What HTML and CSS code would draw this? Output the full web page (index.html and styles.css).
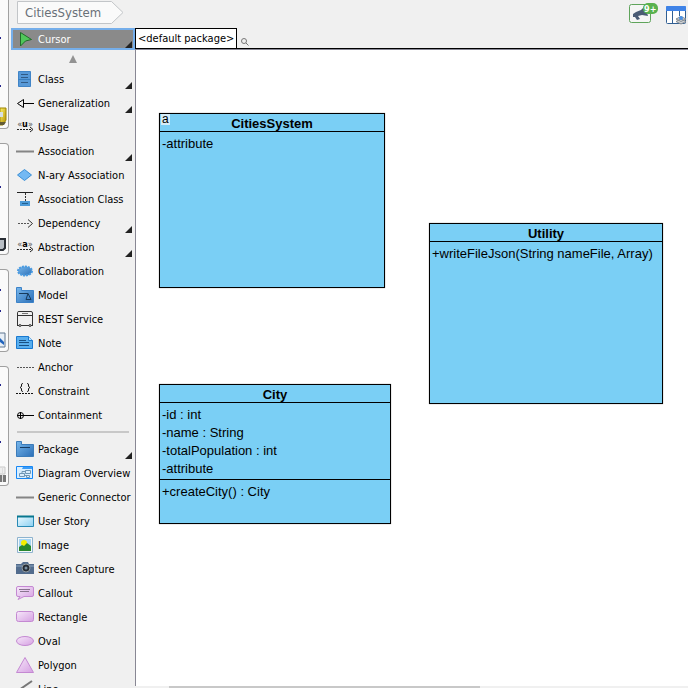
FILE: index.html
```html
<!DOCTYPE html>
<html lang="en">
<head>
<meta charset="utf-8">
<title>CitiesSystem</title>
<link rel="stylesheet" href="styles.css">
</head>
<body>
<svg class="defs" aria-hidden="true">
  <defs>
    <linearGradient id="blue" x1="0" y1="0" x2="1" y2="1"><stop offset="0" stop-color="#77b7ec"/><stop offset="1" stop-color="#2c6fb7"/></linearGradient>
    <linearGradient id="pink" x1="0" y1="0" x2="1" y2="1"><stop offset="0" stop-color="#f7e8fa"/><stop offset="1" stop-color="#d5a0e2"/></linearGradient>
    <linearGradient id="sky" x1="0" y1="0" x2="1" y2="1"><stop offset="0" stop-color="#ecfaff"/><stop offset="1" stop-color="#8bd0f2"/></linearGradient>
    <linearGradient id="gold" x1="0" y1="0" x2="1" y2="1"><stop offset="0" stop-color="#fff36a"/><stop offset="1" stop-color="#b18c00"/></linearGradient>
  </defs>
</svg>
<header class="topbar">
  <a class="crumb" href="#">
    <svg class="crumb-shape" viewBox="0 0 108 23" aria-hidden="true"><path d="M.5 .5H94.500L106 11.500L94.500 22.500H.5Z" fill="#fafafa" stroke="#c2c5c8"/></svg>
    <span>CitiesSystem</span>
  </a>
  <div class="tools">
    <button class="tool" aria-label="Notifications">
      <svg width="32" height="24" viewBox="0 0 32 24"><rect x="1.500" y="2.500" width="21" height="18" rx="2" fill="#f5f5f5" stroke="#5fa45b"/><path d="M5 12L8 10L13 8L17 4L20 14L14 13L10 14L12 17L9 18L7 15L5 15Z" fill="#4a5b74"/><rect x="15" y="1" width="15" height="11" rx="5" fill="#58b14e"/><text x="16" y="10" class="count">9+</text></svg>
    </button>
    <button class="tool" aria-label="Panels">
      <svg width="22" height="24" viewBox="0 0 22 24"><rect x=".5" y="4.500" width="19" height="17" rx="1" fill="#fff" stroke="#315f93"/><path d="M0 5Q0 4 1 4H19Q20 4 20 5V9H0Z" fill="#3f83e7"/><path d="M6.500 9V21M13.500 9V14" stroke="#315f93"/><path d="M10 19.500L15 17L20 19.500L15 22ZM10 17L15 14.500L20 17L15 19.500Z" fill="#cfd3d7" stroke="#858b91"/><circle cx="15" cy="16" r="2" fill="#4b91e3"/></svg>
    </button>
  </div>
</header>
<main class="workspace">
  <aside class="strip" aria-label="Diagram groups">
    <div class="group first"><i class="mark"></i><i class="mark"></i><svg width="7" height="19" viewBox="0 0 7 19"><path d="M0 1H6V13L3 18H0Z" fill="url(#gold)" stroke="#9f8600"/><path d="M0 5H3V10H0Z" fill="#d6e0e5"/><path d="M0 15H6L4 18H0" fill="#625b35"/></svg></div>
    <div class="group second"><i class="mark"></i><svg width="7" height="15" viewBox="0 0 7 15"><path d="M0 2H5V11L3 13H0" fill="#b8bec5" stroke="#292e35" stroke-width="2"/></svg></div>
    <div class="group third"><i class="mark"></i><i class="mark"></i><svg width="7" height="17" viewBox="0 0 7 17"><path d="M0 1H5V15H0" fill="#e8eff6" stroke="#5f7690"/><path d="M0 6L4 10V13L0 10" fill="#2064bd"/></svg></div>
    <div class="group fourth"><i class="mark"></i><i class="mark"></i><svg width="7" height="17" viewBox="0 0 7 17"><path d="M0 1H5V8H0" fill="#eee" stroke="#c8c8c8"/><path d="M0 9H6V16H0Z" fill="#777"/><path d="M2.500 1V16" stroke="#ddd"/></svg></div>
  </aside>
  <nav class="palette" aria-label="Shapes">
    <button class="item selected"><svg viewBox="0 0 20 20"><path d="M5.500 3.500L16.500 10.500L10.500 12L5.500 17Z" fill="#50c75a" stroke="#216b2a"/></svg>Cursor<i class="more"></i></button>
    <button class="scroll" aria-label="Scroll up"><svg width="10" height="8" viewBox="0 0 10 8"><path d="M5 0L9 8H1Z" fill="#929292"/></svg></button>
    <button class="item"><svg viewBox="0 0 20 20"><path d="M3.500 2.500H15.500V17.500H3.500Z" fill="#5799d8" stroke="#4084c7"/><path d="M3 10.500H16" stroke="#397ebf"/><path d="M6 5.500H13M6 8.500H13M6 13.500H13" stroke="#315b86"/></svg>Class<i class="more"></i></button>
    <button class="item"><svg viewBox="0 0 20 20"><path d="M8.500 6.500L2.500 10.500L8.500 14.500ZM9 10.500H19" fill="none" stroke="#000"/></svg>Generalization<i class="more"></i></button>
    <button class="item"><svg viewBox="0 0 20 20"><text x="10" y="10" class="stereo">«<tspan class="key">u</tspan>»</text><path d="M2 12.500H17" stroke="#222" stroke-dasharray="2 1"/><path d="M15 10L18 12.500L15 15" fill="none" stroke="#222"/></svg>Usage</button>
    <button class="item"><svg viewBox="0 0 20 20"><path d="M1 10.500H19" stroke="#858585" stroke-width="2"/></svg>Association<i class="more"></i></button>
    <button class="item"><svg viewBox="0 0 20 20"><path d="M9.500 4.500L16.500 10L9.500 15.500L2.500 10Z" fill="#74b9f3" stroke="#3b8fd6"/></svg>N-ary Association</button>
    <button class="item"><svg viewBox="0 0 20 20"><path d="M2 3.500H18" stroke="#222"/><path d="M10.500 4V12" stroke="#333" stroke-dasharray="2 1"/><path d="M5 12H15V17H5Z" fill="#4b9ad8"/><path d="M7 14.500H13" stroke="#24608f"/></svg>Association Class</button>
    <button class="item"><svg viewBox="0 0 20 20"><path d="M3 10.500H15" stroke="#555" stroke-dasharray="2 1"/><path d="M13 6.500L17.500 10.500L13 14.500" fill="none" stroke="#333"/></svg>Dependency<i class="more"></i></button>
    <button class="item"><svg viewBox="0 0 20 20"><text x="10" y="10" class="stereo">«<tspan class="key">a</tspan>»</text><path d="M2 12.500H17" stroke="#222" stroke-dasharray="2 1"/><path d="M15 10L18 12.500L15 15" fill="none" stroke="#222"/></svg>Abstraction<i class="more"></i></button>
    <button class="item"><svg viewBox="0 0 20 20"><ellipse cx="10" cy="10" rx="7" ry="4.500" fill="url(#blue)" stroke="#4a9be1" stroke-width="2" stroke-dasharray="2 1"/></svg>Collaboration</button>
    <button class="item"><svg viewBox="0 0 20 20"><path d="M1.500 2.500H6.500V5.500H18.500V17.500H1.500Z" fill="url(#blue)" stroke="#3c82c8"/><path d="M4 8.500H13L16 14.500H11L13 8.500" fill="none" stroke="#17395a"/></svg>Model</button>
    <button class="item"><svg viewBox="0 0 20 20"><path d="M2.500 17V3.500Q2.500 2.500 4 2.500H16Q17.500 2.500 17.500 4V17M2 6.500H18M3 16.500H17" fill="none" stroke="#333"/><path d="M7 4.500H13" stroke="#777"/><circle cx="5" cy="16.500" r="1" fill="#eee" stroke="#333"/><circle cx="15" cy="16.500" r="1" fill="#eee" stroke="#333"/></svg>REST Service</button>
    <button class="item"><svg viewBox="0 0 20 20"><path d="M1.500 3.500H13.500L17.500 7.500V15.500H1.500Z" fill="#58aeee" stroke="#1979d0"/><path d="M13.500 3.500V7.500H17.500" fill="#c5e5fb" stroke="#1979d0"/><path d="M4 7.500H11M4 9.500H14M4 12.500H14" stroke="#184f83"/></svg>Note</button>
    <button class="item"><svg viewBox="0 0 20 20"><path d="M2 10.500H19" stroke="#555" stroke-dasharray="2 1"/></svg>Anchor</button>
    <button class="item"><svg viewBox="0 0 20 20"><path d="M8 2.500H7.500Q6.500 2.500 6.500 4V5.500L5 6.500L6.500 7.500V9Q6.500 10.500 7.500 10.500H8M12 2.500H12.500Q13.500 2.500 13.500 4V5.500L15 6.500L13.500 7.500V9Q13.500 10.500 12.500 10.500H12" fill="none" stroke="#111"/><path d="M1 12.500H19" stroke="#111" stroke-dasharray="2 1"/></svg>Constraint</button>
    <button class="item"><svg viewBox="0 0 20 20"><circle cx="5.500" cy="10.500" r="3" fill="none" stroke="#000"/><path d="M2 10.500H19M5.500 7V14" stroke="#000"/></svg>Containment</button>
    <hr class="divider">
    <button class="item"><svg viewBox="0 0 20 20"><path d="M1.500 2.500H6.500V5.500H18.500V17.500H1.500Z" fill="url(#blue)" stroke="#3c7cba"/><path d="M5 8.500H15" stroke="#163c64"/></svg>Package<i class="more"></i></button>
    <button class="item"><svg viewBox="0 0 20 20"><path d="M1.500 3.500H17.500V15.500H1.500Z" fill="#d8eeff" stroke="#1687f5"/><path d="M2 4H8L7 6H17V4H2Z" fill="#3b9cf7"/><path d="M10.500 7.500H15.500V10.500H10.500ZM4.500 10.500H9.500V13.500H4.500ZM11.500 12.500H14.500V14.500H11.500ZM7 10V8.500H10M9 12.500H12" fill="none" stroke="#6f96b5"/></svg>Diagram Overview</button>
    <button class="item"><svg viewBox="0 0 20 20"><path d="M1 10.500H19" stroke="#858585" stroke-width="2"/></svg>Generic Connector</button>
    <button class="item"><svg viewBox="0 0 20 20"><path d="M2.500 5.500H18.500V15.500H2.500Z" fill="url(#sky)" stroke="#298ab5"/><path d="M2 5.500H19" stroke="#08778f" stroke-width="2"/></svg>User Story</button>
    <button class="item"><svg viewBox="0 0 20 20"><path d="M2.500 2.500H17.500V17.500H2.500Z" fill="#f4f8fa" stroke="#8eb3ce"/><path d="M4 4H16V15H4Z" fill="#a8d5f4"/><circle cx="9" cy="8" r="3" fill="#f4ee00"/><path d="M4 12L7 10L9 11L12 8L16 11V16H4Z" fill="#28872f"/></svg>Image</button>
    <button class="item"><svg viewBox="0 0 20 20"><path d="M1 5H6L8 3H13L14 5H19V15H1Z" fill="#526c8d"/><path d="M1 7H19" stroke="#8ca5bf"/><circle cx="11" cy="9" r="4" fill="#252c35" stroke="#8f999f"/><circle cx="11" cy="9" r="1.500" fill="#7890a2"/></svg>Screen Capture</button>
    <button class="item"><svg viewBox="0 0 20 20"><path d="M3 3.500H17Q18.500 3.500 18.500 5V12Q18.500 13.500 17 13.500H9L3 16.500L5 13.500H3Q1.500 13.500 1.500 12V5Q1.500 3.500 3 3.500Z" fill="url(#pink)" stroke="#c489d2"/><path d="M4 6.500H15M5 8.500H14" stroke="#88748e"/></svg>Callout</button>
    <button class="item"><svg viewBox="0 0 20 20"><rect x="1.500" y="4.500" width="17" height="10" rx="2" fill="url(#pink)" stroke="#c489d2"/></svg>Rectangle</button>
    <button class="item"><svg viewBox="0 0 20 20"><ellipse cx="10" cy="10" rx="8.500" ry="4.500" fill="url(#pink)" stroke="#c489d2"/></svg>Oval</button>
    <button class="item"><svg viewBox="0 0 20 20"><path d="M10 2.500L18.500 17.500H1.500Z" fill="url(#pink)" stroke="#c489d2"/></svg>Polygon</button>
    <button class="item"><svg viewBox="0 0 20 20"><path d="M4 11L17 2" stroke="#777" stroke-width="2"/></svg>Line</button>
  </nav>
  <section class="editor">
    <div class="tabs"><button class="tab">&lt;default package&gt;</button><button class="search" aria-label="Search"><svg width="8" height="8" viewBox="0 0 8 8"><circle cx="3" cy="3" r="2.500" fill="none" stroke="#777"/><path d="M5 5L7.500 7.500" stroke="#777"/></svg></button></div>
    <div class="canvas">
      <article class="node cities"><span class="badge">a</span><h2>CitiesSystem</h2><ul><li>-attribute</li></ul></article>
      <article class="node utility"><h2>Utility</h2><ul><li>+writeFileJson(String nameFile, Array)</li></ul></article>
      <article class="node city"><h2>City</h2><ul><li>-id : int</li><li>-name : String</li><li>-totalPopulation : int</li><li>-attribute</li></ul><ul><li>+createCity() : City</li></ul></article>
    </div>
    <div class="scrollbar"><i class="thumb"></i></div>
  </section>
</main>
</body>
</html>
```
FILE: styles.css
```css
* { box-sizing: border-box; }
body {
  margin: 0;
  height: 100vh;
  overflow: hidden;
  display: flex;
  flex-direction: column;
  background: #f0f0f0;
  color: #000;
  font-family: "DejaVu Sans Condensed", "DejaVu Sans", sans-serif;
  font-size: 11px;
}
button { margin: 0; padding: 0; border: 0; background: none; color: inherit; font: inherit; }
svg { display: block; flex: none; }
.defs { position: absolute; width: 0; height: 0; }

.topbar { flex: none; height: 28px; display: flex; justify-content: space-between; padding-left: 17px; }
.crumb { position: relative; width: 108px; height: 23px; margin-top: 1px; padding-left: 8px; line-height: 24px; font-size: 13px; color: #697078; text-decoration: none; }
.crumb-shape { position: absolute; inset: 0; width: 108px; height: 23px; }
.crumb span { position: relative; }
.tools { display: flex; gap: 6px; }
.count { font-size: 9px; font-weight: bold; fill: #fff; }
.stereo { font-size: 9px; text-anchor: middle; fill: #555; }
.key { font-weight: bold; fill: #000; }

.workspace { flex: 1; min-height: 0; display: grid; grid-template-columns: 11px 124px 1fr; }
.strip { display: flex; flex-direction: column; gap: 14px; margin-top: -28px; width: 9px; }
.group { display: flex; flex-direction: column; flex: none; padding-bottom: 2px; background: #fafafa; border: 1px solid #a0a0a0; border-left: 0; border-radius: 0 4px 4px 0; }
.group svg { margin-top: auto; }
.first { height: 129px; border-top: 0; border-top-right-radius: 0; padding-top: 37px; }
.first .mark + .mark { margin-top: 46px; }
.second { height: 112px; padding-top: 42px; }
.third { height: 83px; padding-top: 19px; }
.third .mark + .mark { margin-top: 19px; }
.fourth { height: 120px; padding-top: 17px; }
.fourth .mark + .mark { margin-top: 55px; }
.mark { width: 1px; height: 2px; background: #25258c; }

.palette { overflow: hidden; display: flex; flex-direction: column; }
.item { position: relative; flex: none; height: 24px; display: flex; align-items: center; gap: 3px; padding-left: 4px; text-align: left; white-space: nowrap; }
.item svg { width: 20px; height: 20px; }
.selected { height: 22px; padding-left: 2px; border: 2px solid #75aeea; background: #8a8a8a; color: #fff; }
.more { position: absolute; right: 3px; bottom: 2px; width: 7px; height: 7px; background: #222; clip-path: polygon(100% 0, 100% 100%, 0 100%); }
.selected .more { right: 1px; bottom: 0; }
.scroll { flex: none; height: 17px; display: flex; justify-content: center; align-items: center; }
.divider { flex: none; width: 112px; height: 2px; margin: 4px 0 4px 6px; border: 0; background: #c8c8c8; }

.editor { min-width: 0; display: flex; flex-direction: column; }
.tabs { flex: none; height: 21px; display: flex; border-bottom: 1px solid #000; }
.tab { padding: 0 2px; border: 1px solid #000; border-bottom: 0; background: #fff; white-space: nowrap; }
.search { display: flex; align-items: flex-end; padding: 0 0 2px 4px; }
.canvas { position: relative; flex: 1; overflow: hidden; background: #fff; border-top: 1px solid #888794; border-left: 1px solid #888794; }
.node { position: absolute; display: flex; flex-direction: column; background: #7acff5; border: 1px solid #000; box-shadow: 0 0 1px #888; font-family: "Liberation Sans", Arial, sans-serif; font-size: 13px; line-height: 18px; }
.node h2 { margin: 0; height: 18px; border-bottom: 1px solid #000; font-size: 13px; line-height: 20px; text-align: center; }
.node ul { margin: 0; padding: 3px 2px 1px; list-style: none; white-space: nowrap; }
.node ul + ul { border-top: 1px solid #000; }
.cities { left: 23px; top: 63px; width: 226px; height: 175px; }
.utility { left: 293px; top: 173px; width: 234px; height: 181px; }
.city { left: 23px; top: 334px; width: 232px; height: 140px; }
.badge { position: absolute; left: 1px; top: 0; padding: 0 1px; background: #d5edf8; font-size: 12px; line-height: 11px; }
.scrollbar { flex: none; height: 2px; padding-left: 34px; background: #f0f0f0; }
.thumb { display: block; width: 60%; height: 2px; background: #c8c8c8; }
```
